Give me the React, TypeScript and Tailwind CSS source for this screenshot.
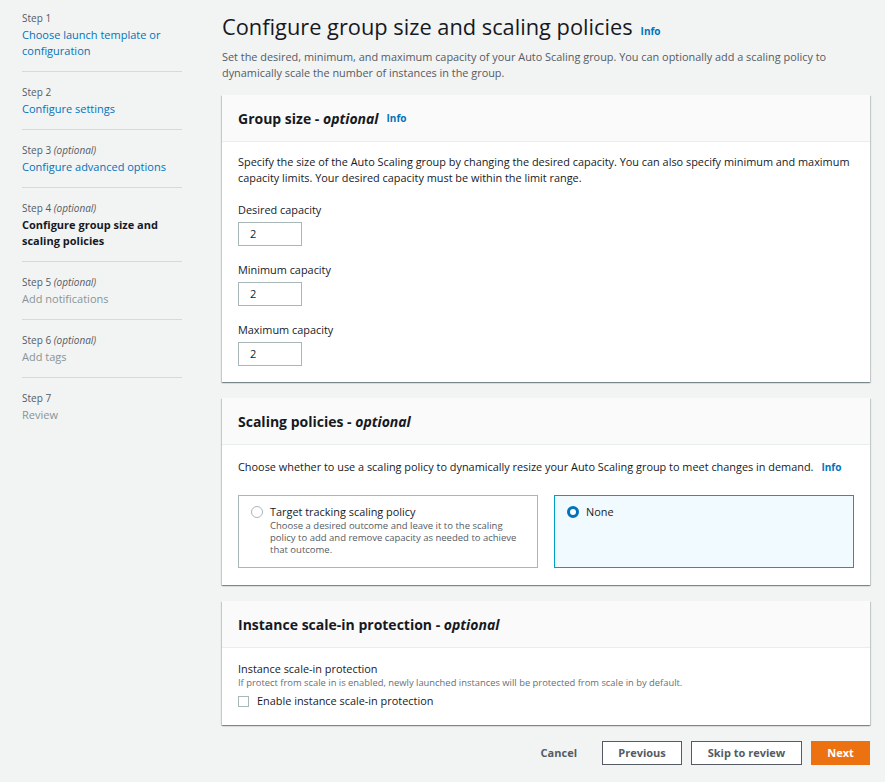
import React from 'react';

const steps = [
  { n: 1, opt: false, title: 'Choose launch template or configuration', state: 'link' },
  { n: 2, opt: false, title: 'Configure settings', state: 'link' },
  { n: 3, opt: true, title: 'Configure advanced options', state: 'link' },
  { n: 4, opt: true, title: 'Configure group size and scaling policies', state: 'active' },
  { n: 5, opt: true, title: 'Add notifications', state: 'disabled' },
  { n: 6, opt: true, title: 'Add tags', state: 'disabled' },
  { n: 7, opt: false, title: 'Review', state: 'disabled' },
];

const Info = () => <span className="text-[10px] font-bold text-[#0073bb]">Info</span>;

const Card = ({ title, info, children }: { title: string; info?: boolean; children: React.ReactNode }) => (
  <div className="bg-white shadow-[0_1px_1px_0_rgba(0,28,36,0.3),1px_1px_1px_0_rgba(0,28,36,0.15),-1px_1px_1px_0_rgba(0,28,36,0.15)]">
    <div className="flex h-[47px] items-center gap-2 border-b border-[#eaeded] bg-[#fafafa] px-4">
      <h2 className="text-[14px] font-bold text-[#16191f]">
        {title} - <i>optional</i>
      </h2>
      {info && <Info />}
    </div>
    {children}
  </div>
);

const CapacityField = ({ label }: { label: string }) => (
  <div className="mt-4">
    <div className="text-[10.9px] leading-4 text-[#16191f]">{label}</div>
    <div className="mt-1 flex h-6 w-16 items-center border border-[#aab7b8] px-[11px] text-[11px] text-[#16191f]">2</div>
  </div>
);

export default function App() {
  return (
    <div className="flex min-h-screen bg-[#f2f3f3] font-['Open_Sans',sans-serif] text-[#16191f]">
      <aside className="w-[200px] shrink-0 pl-[22px] pr-[18px]">
        {steps.map((s, i) => (
          <div key={s.n} className={`pb-3 ${i > 0 ? 'border-t border-[#d5dbdb] pt-[11px]' : 'pt-[9px]'}`}>
            <div className="text-[10px] leading-[18px] text-[#545b64]">
              Step {s.n} {s.opt && <i>(optional)</i>}
            </div>
            <div
              className={`text-[11px] leading-4 ${
                s.state === 'active' ? 'font-bold text-[#16191f]' : s.state === 'link' ? 'text-[#0073bb]' : 'text-[#879596]'
              }`}
            >
              {s.title}
            </div>
          </div>
        ))}
      </aside>

      <main className="flex-1 pl-[22px] pr-[15px] pb-4">
        <div className="flex items-baseline gap-2 pt-[11px]">
          <h1 className="text-[21.8px] leading-8 text-[#16191f]">Configure group size and scaling policies</h1>
          <Info />
        </div>
        <p className="mt-[6px] text-[10.9px] leading-4 text-[#545b64]">
          Set the desired, minimum, and maximum capacity of your Auto Scaling group. You can optionally add a scaling policy to
          dynamically scale the number of instances in the group.
        </p>

        <div className="mt-[14px] flex flex-col gap-4">
          <Card title="Group size" info>
            <div className="px-4 pb-4 pt-3">
              <p className="text-[10.9px] leading-4 text-[#16191f]">
                Specify the size of the Auto Scaling group by changing the desired capacity. You can also specify minimum and maximum
                capacity limits. Your desired capacity must be within the limit range.
              </p>
              <CapacityField label="Desired capacity" />
              <CapacityField label="Minimum capacity" />
              <CapacityField label="Maximum capacity" />
            </div>
          </Card>

          <Card title="Scaling policies">
            <div className="px-4 pb-[17px] pt-[14px]">
              <p className="text-[10.9px] leading-4 text-[#16191f]">
                Choose whether to use a scaling policy to dynamically resize your Auto Scaling group to meet changes in demand.
                <span className="ml-2"><Info /></span>
              </p>
              <div className="mt-5 grid grid-cols-2 gap-4">
                <div className="flex h-[73px] gap-[7px] border border-[#aab7b8] px-3 pt-2">
                  <span className="mt-[2px] h-3 w-3 shrink-0 rounded-full border border-[#aab7b8] bg-white" />
                  <div>
                    <div className="text-[10.9px] leading-4">Target tracking scaling policy</div>
                    <div className="text-[9.5px] leading-3 text-[#545b64]">
                      Choose a desired outcome and leave it to the scaling policy to add and remove capacity as needed to achieve that
                      outcome.
                    </div>
                  </div>
                </div>
                <div className="flex h-[73px] gap-[7px] border border-[#00a1c9] bg-[#f1faff] px-3 pt-2">
                  <span className="mt-[2px] h-3 w-3 shrink-0 rounded-full border-[3.5px] border-[#0073bb] bg-white" />
                  <div className="text-[10.9px] leading-4">None</div>
                </div>
              </div>
            </div>
          </Card>

          <Card title="Instance scale-in protection">
            <div className="px-4 pb-4 pt-[13px]">
              <div className="text-[10.9px] leading-4">Instance scale-in protection</div>
              <div className="text-[9.4px] leading-3 text-[#687078]">
                If protect from scale in is enabled, newly launched instances will be protected from scale in by default.
              </div>
              <label className="mt-1 flex items-center gap-2">
                <span className="h-[11px] w-[11px] border border-[#aab7b8] bg-white" />
                <span className="text-[10.9px] leading-4">Enable instance scale-in protection</span>
              </label>
            </div>
          </Card>
        </div>

        <div className="mt-4 flex items-center justify-end gap-[9px]">
          <button className="px-4 text-[11px] font-bold text-[#545b64]">Cancel</button>
          <button className="h-6 w-20 border border-[#545b64] bg-white text-[11px] font-bold text-[#545b64]">Previous</button>
          <button className="h-6 w-[111px] border border-[#545b64] bg-white text-[11px] font-bold text-[#545b64]">Skip to review</button>
          <button className="h-6 w-[59px] bg-[#ec7211] text-[11px] font-bold text-white">Next</button>
        </div>
      </main>
    </div>
  );
}
